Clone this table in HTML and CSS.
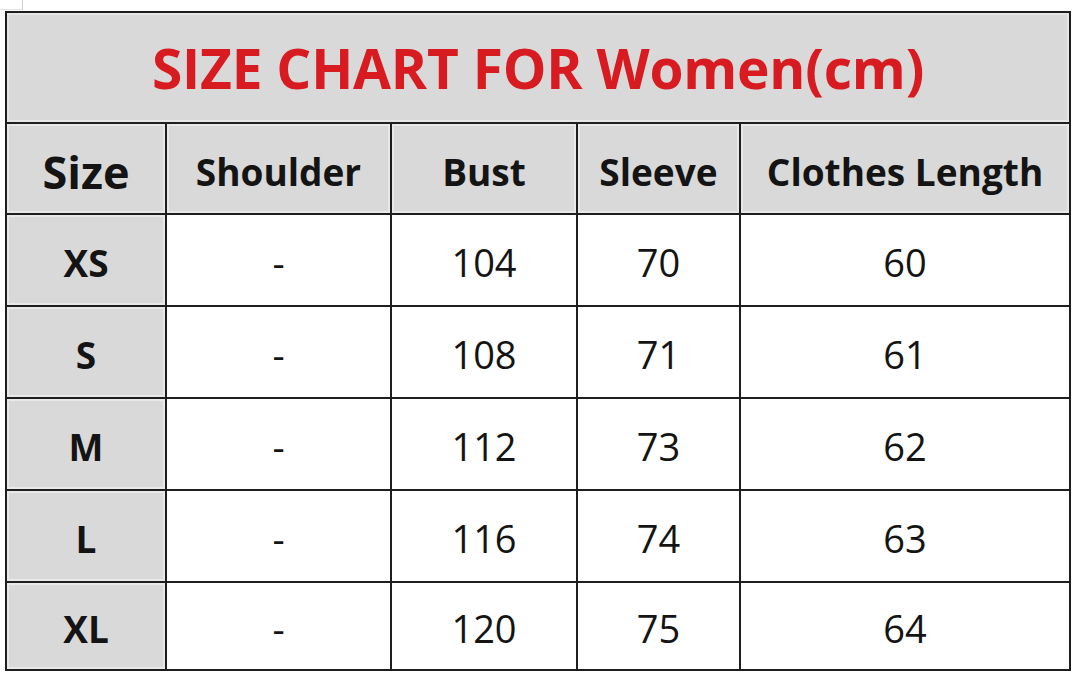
FILE: index.html
```html
<!DOCTYPE html>
<html>
<head>
<meta charset="utf-8">
<link rel="stylesheet" href="styles.css">
</head>
<body>
<div class="page">
  <div class="corner"></div>
  <table class="chart">
    <colgroup>
      <col class="c1"><col class="c2"><col class="c3"><col class="c4"><col class="c5">
    </colgroup>
    <tr class="title-row"><td colspan="5" class="title">SIZE CHART FOR Women(cm)</td></tr>
    <tr class="head-row">
      <th class="size-head">Size</th>
      <th>Shoulder</th>
      <th>Bust</th>
      <th>Sleeve</th>
      <th>Clothes Length</th>
    </tr>
    <tr class="row"><th class="sz">XS</th><td>-</td><td>104</td><td>70</td><td>60</td></tr>
    <tr class="row"><th class="sz">S</th><td>-</td><td>108</td><td>71</td><td>61</td></tr>
    <tr class="row"><th class="sz">M</th><td>-</td><td>112</td><td>73</td><td>62</td></tr>
    <tr class="row"><th class="sz">L</th><td>-</td><td>116</td><td>74</td><td>63</td></tr>
    <tr class="row last"><th class="sz">XL</th><td>-</td><td>120</td><td>75</td><td>64</td></tr>
  </table>
</div>
</body>
</html>
```
FILE: styles.css
```css
html, body {
  margin: 0;
  padding: 0;
  background: #ffffff;
}
.page {
  position: relative;
  padding: 11px 0 0 5px;
  width: 1074px;
  height: 677px;
  box-sizing: border-box;
}
.corner {
  position: absolute;
  left: 0;
  top: 0;
  width: 22px;
  height: 9px;
  border-right: 1px solid #cfcfcf;
  border-bottom: 1px solid #e2e2e2;
}
.chart {
  border-collapse: collapse;
  table-layout: fixed;
  width: 1064px;
  font-family: "Open Sans", "Liberation Sans", sans-serif;
  color: #141414;
}
.c1 { width: 160px; }
.c2 { width: 225px; }
.c3 { width: 186px; }
.c4 { width: 163px; }
.c5 { width: 330px; }
.chart td, .chart th {
  border: 2px solid #1e1e1e;
  text-align: center;
  vertical-align: middle;
  padding: 0;
}
.title-row { height: 111px; }
.title {
  background: #d9d9d9;
  color: #d81b20;
  font-weight: 700;
  font-size: 55px;
  letter-spacing: -0.2px;
  box-shadow: inset 0 0 0 2px #e6e6e6;
}
.head-row { height: 91px; }
.head-row th {
  background: #d9d9d9;
  font-weight: 700;
  font-size: 37px;
  padding-top: 6px;
  box-shadow: inset 0 0 0 2px #e8e8e8;
}
.head-row th.size-head {
  font-size: 45px;
}
.row { height: 92px; }
.row.last { height: 88px; }
.row td {
  background: #ffffff;
  font-size: 38px;
  font-weight: 400;
  padding-top: 4px;
}
.row th.sz {
  background: #d9d9d9;
  font-weight: 700;
  font-size: 37px;
  padding-top: 4px;
  box-shadow: inset 0 0 0 2px #e8e8e8;
}
```
